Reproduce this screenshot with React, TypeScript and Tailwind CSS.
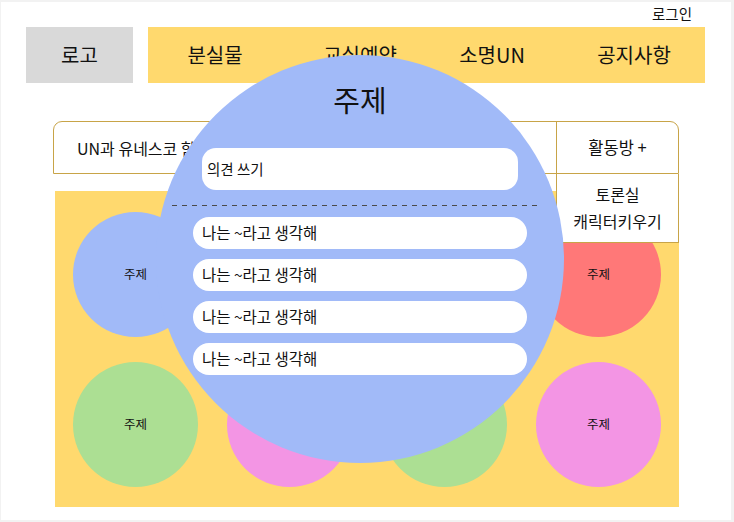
import React from "react";

const Bubble = ({ color, label = true }: { color: string; label?: boolean }) => (
  <div
    className={`flex h-[125px] w-[125px] items-center justify-center rounded-full text-[12.5px] ${color}`}
  >
    {label ? "주제" : null}
  </div>
);

export default function App() {
  const opinions = ["나는 ~라고 생각해", "나는 ~라고 생각해", "나는 ~라고 생각해", "나는 ~라고 생각해"];
  return (
    <div className="h-[522px] w-[734px] bg-[#f2f2f2] pl-[1px] pt-[2px] font-['Noto_Sans_CJK_KR',sans-serif] text-[#111111]">
      <div className="relative h-[518px] w-[730px] bg-white pt-[2px]">
        {/* top login */}
        <div className="flex h-[20px] justify-end pr-[39px] text-[14.5px] leading-[20px]">로그인</div>

        {/* header */}
        <div className="mt-[3px] flex h-[56px] pl-[25px]">
          <div className="flex w-[107px] items-center justify-center bg-[#d9d9d9] text-[20px]">로고</div>
          <nav className="ml-[15px] flex w-[557px] items-center bg-[#ffd96e] text-[20px]">
            <div className="ml-[22px] w-[90px] text-center">분실물</div>
            <div className="ml-[55px] w-[90px] text-center">교실예약</div>
            <div className="ml-[42px] w-[90px] text-center">소명UN</div>
            <div className="ml-[52px] w-[90px] text-center">공지사항</div>
          </nav>
        </div>

        {/* content */}
        <div className="relative ml-[52px] mt-[38px] w-[626px]">
          <div className="flex h-[53px] rounded-t-[9px] border border-[#c8a448]">
            <div className="flex flex-1 items-center pl-[23px] text-[16px]">UN과 유네스코 함께하는 활동</div>
            <div className="flex w-[122px] items-center justify-center border-l border-[#c8a448] text-[16.5px]">
              활동방 +
            </div>
          </div>

          <div className="ml-[2px] mt-[17px] flex h-[316px] w-[624px] flex-col gap-[25px] bg-[#ffd96e] px-[18px] pt-[21px]">
            <div className="flex justify-between">
              <Bubble color="bg-[#a1baf8]" />
              <Bubble color="bg-[#f395e4]" label={false} />
              <Bubble color="bg-[#acdf93]" label={false} />
              <Bubble color="bg-[#ff7878]" />
            </div>
            <div className="flex justify-between">
              <Bubble color="bg-[#acdf93]" />
              <Bubble color="bg-[#f395e4]" label={false} />
              <Bubble color="bg-[#acdf93]" label={false} />
              <Bubble color="bg-[#f395e4]" />
            </div>
          </div>

          {/* dropdown */}
          <div className="absolute right-0 top-[53px] flex h-[69px] w-[123px] flex-col items-center border border-t-0 border-[#c8a448] bg-white pt-[7px] text-[16px] leading-[27px]">
            <div>토론실</div>
            <div>캐릭터키우기</div>
          </div>
        </div>

        {/* big topic circle */}
        <div className="absolute left-[155px] top-[53px] flex h-[408px] w-[408px] flex-col items-center rounded-full bg-[#a1baf8]">
          <div className="mt-[26px] h-[36px] text-[29px] leading-[36px]">주제</div>
          <div className="mt-[31px] flex h-[42px] w-[316px] items-center rounded-[14px] bg-white pl-[5px] text-[14.5px]">
            의견 쓰기
          </div>
          <div className="mr-[6px] mt-[15px] h-px w-[370px] bg-[repeating-linear-gradient(90deg,#4a4a4a_0_5px,transparent_5px_10px)]" />
          <div className="mt-[11px] flex flex-col gap-[10px]">
            {opinions.map((o, i) => (
              <div key={i} className="flex h-[32px] w-[334px] items-center rounded-full bg-white pl-[9px] text-[15.5px]">
                {o}
              </div>
            ))}
          </div>
        </div>
      </div>
    </div>
  );
}
